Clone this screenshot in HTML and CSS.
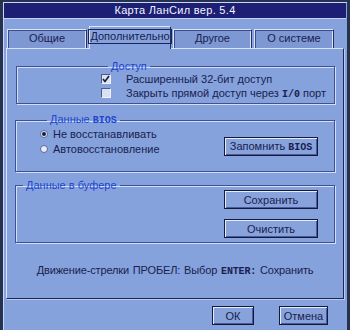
FILE: index.html
```html
<!DOCTYPE html>
<html>
<head>
<meta charset="utf-8">
<link rel="stylesheet" href="styles.css">
</head>
<body>
<div class="window">
  <div class="titlebar">Карта ЛанСил вер. 5.4</div>
  <div class="tabs">
    <div class="tab t1">Общие</div>
    <div class="tab t2 active"><span class="focus">Дополнительно</span></div>
    <div class="tab t3">Другое</div>
    <div class="tab t4">О системе</div>
  </div>
  <div class="panel">
    <fieldset class="group g1">
      <legend>Доступ</legend>
      <div class="check-row"><span class="check"><svg width="8" height="8" viewBox="0 0 8 8"><polyline points="1,4 3,6.5 7,1" fill="none" stroke="#151c44" stroke-width="1.6"/></svg></span><span>Расширенный 32-бит доступ</span></div>
      <div class="check-row"><span class="check"></span><span>Закрыть прямой доступ через <span class="mono">I/0</span> порт</span></div>
    </fieldset>
    <fieldset class="group g2">
      <legend>Данные <span class="mono">BIOS</span></legend>
      <div class="bios-body">
        <div class="radios">
          <div class="radio-row"><span class="radio on"></span><span>Не восстанавливать</span></div>
          <div class="radio-row"><span class="radio"></span><span>Автовосстановление</span></div>
        </div>
        <div class="btn wide"><span>Запомнить <span class="mono">BIOS</span></span></div>
      </div>
    </fieldset>
    <fieldset class="group g3">
      <legend>Данные в буфере</legend>
      <div class="buf-body">
        <div class="btn wide">Сохранить</div>
        <div class="btn wide">Очистить</div>
      </div>
    </fieldset>
    <div class="hint">Движение-стрелки ПРОБЕЛ: Выбор <span class="mono">ENTER:</span> Сохранить</div>
  </div>
  <div class="actions">
    <div class="btn ok">ОК</div>
    <div class="btn cancel">Отмена</div>
  </div>
</div>
</body>
</html>
```
FILE: styles.css
```css
html, body {
  margin: 0;
  padding: 0;
  width: 350px;
  height: 330px;
  overflow: hidden;
  background: #27324f;
}
body {
  font-family: "Liberation Sans", Arial, sans-serif;
  font-size: 11px;
  color: #18214f;
}
.window {
  margin: 2px 3px 0 3px;
  height: 328px;
  box-sizing: border-box;
  background: #86a2dc;
  border-left: 1px solid #c9d7f7;
  border-top: 1px solid #c9d7f7;
  display: flex;
  flex-direction: column;
}
.titlebar {
  height: 15px;
  margin-right: 1px;
  background: #1d1f74;
  color: #f2f4ff;
  text-align: center;
  line-height: 15px;
  font-size: 11px;
  letter-spacing: 0.3px;
  border-bottom: 1px solid #c3d2f4;
}
.tabs {
  display: flex;
  align-items: flex-end;
  gap: 2px;
  height: 22px;
  margin-top: 7px;
  padding-left: 3px;
  position: relative;
  z-index: 2;
}
.tab {
  height: 19px;
  box-sizing: border-box;
  display: flex;
  align-items: center;
  justify-content: center;
  border: 1px solid #d9e5ff;
  border-right-color: #27305d;
  border-bottom: none;
  box-shadow: inset 1px 1px 0 #3d4d8c, inset -1px 0 0 #d9e5ff;
  background: #7e98d4;
  padding-bottom: 2px;
}
.t1 { width: 80px; }
.t2 { width: 82px; }
.t3 { width: 79px; }
.t4 { width: 80px; }
.tab.active {
  height: 23px;
  margin-bottom: -1px;
  background: #86a2dc;
  box-shadow: none;
  border-color: #dce7ff;
  border-right-color: #27305d;
  padding-bottom: 3px;
}
.focus {
  border: 1px solid #1b2452;
  padding: 1px 1px;
  line-height: 11px;
}
.panel {
  margin: 0 3px 0 2px;
  height: 251px;
  box-sizing: border-box;
  border: 1px solid #d6e2ff;
  border-right-color: #202a56;
  border-bottom-color: #1c2550;
  box-shadow: 1px 1px 0 #b9cbf2;
  padding: 12px 8px 0 8px;
  display: flex;
  flex-direction: column;
}
.group {
  margin: 0;
  padding: 0;
  border: 1px solid #3f5191;
  box-shadow: 1px 1px 0 #d2dfff, inset 1px 1px 0 #d2dfff;
  min-width: 0;
}
.group legend {
  color: #1d45cf;
  line-height: 10px;
  padding: 0 3px;
  margin-left: 7px;
}
.g1 { padding: 1px 0 3px 84px; margin-left: 1px; }
.g2 { margin-top: 10px; padding: 1px 16px 15px 24px; }
.g3 { margin-top: 8px; padding: 0 16px 4px 0; }
.check-row {
  height: 14px;
  display: flex;
  align-items: center;
}
.check {
  width: 10px;
  height: 10px;
  box-sizing: border-box;
  background: #d9e0f0;
  border: 1px solid #4c5a8e;
  border-right-color: #eef2ff;
  border-bottom-color: #eef2ff;
  margin-right: 15px;
  display: flex;
  align-items: center;
  justify-content: center;
}
.check svg { display: block; }
.bios-body {
  display: flex;
  justify-content: space-between;
  align-items: flex-end;
}
.radios {
  align-self: flex-start;
  display: flex;
  flex-direction: column;
  gap: 1px;
}
.radio-row {
  height: 14px;
  display: flex;
  align-items: center;
}
.radio {
  width: 8px;
  height: 8px;
  box-sizing: border-box;
  border-radius: 50%;
  background: #e6ecfa;
  border: 1px solid #5b6796;
  margin-right: 5px;
  position: relative;
}
.radio.on::after {
  content: "";
  position: absolute;
  left: 1px;
  top: 1px;
  width: 4px;
  height: 4px;
  border-radius: 50%;
  background: #151c44;
}
.buf-body {
  display: flex;
  flex-direction: column;
  align-items: flex-end;
  gap: 10px;
}
.btn {
  box-sizing: border-box;
  height: 19px;
  display: flex;
  align-items: center;
  justify-content: center;
  background: #88a3dc;
  border: 1px solid #141a3c;
  box-shadow: inset 1px 1px 0 #e3ecff, inset -1px -1px 0 #4b5b98;
  color: #18214f;
}
.btn.wide { width: 94px; }
.mono {
  font-family: "Liberation Mono", "DejaVu Sans Mono", monospace;
  font-weight: bold;
  font-size: 10px;
}
.hint {
  margin-top: 21px;
  text-align: center;
  line-height: 12px;
  letter-spacing: -0.15px;
  word-spacing: 1px;
}
.actions {
  display: flex;
  justify-content: flex-end;
  gap: 25px;
  margin-top: 7px;
  padding-right: 19px;
}
.ok { width: 42px; }
.cancel { width: 49px; }
```
